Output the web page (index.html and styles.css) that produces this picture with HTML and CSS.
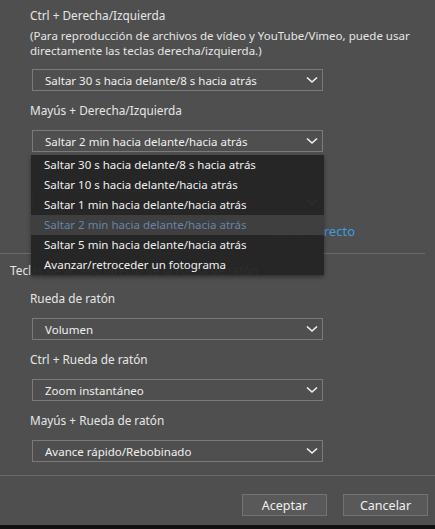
FILE: index.html
```html
<!DOCTYPE html>
<html lang="es">
<head>
<meta charset="utf-8">
<link rel="stylesheet" href="styles.css">
</head>
<body>
<div class="page">
  <div class="group">
    <div class="label">Ctrl + Derecha/Izquierda</div>
    <div class="note">(Para reproducción de archivos de vídeo y YouTube/Vimeo, puede usar<br>directamente las teclas derecha/izquierda.)</div>
    <div class="select"><span>Saltar 30 s hacia delante/8 s hacia atrás</span><svg class="chev" width="12" height="8" viewBox="0 0 12 8"><path d="M1 1.5 L6 6 L11 1.5" fill="none" stroke="#f2f2f2" stroke-width="1.6"/></svg></div>
    <div class="label">Mayús + Derecha/Izquierda</div>
    <div class="select-wrap">
      <div class="select"><span>Saltar 2 min hacia delante/hacia atrás</span><svg class="chev" width="12" height="8" viewBox="0 0 12 8"><path d="M1 1.5 L6 6 L11 1.5" fill="none" stroke="#f2f2f2" stroke-width="1.6"/></svg></div>
      <ul class="menu">
        <li>Saltar 30 s hacia delante/8 s hacia atrás</li>
        <li>Saltar 10 s hacia delante/hacia atrás</li>
        <li>Saltar 1 min hacia delante/hacia atrás</li>
        <li class="sel">Saltar 2 min hacia delante/hacia atrás</li>
        <li>Saltar 5 min hacia delante/hacia atrás</li>
        <li>Avanzar/retroceder un fotograma</li>
      </ul>
    </div>
    <div class="spacer"></div>
    <div class="select hidden-select"><span></span><svg class="chev" width="12" height="8" viewBox="0 0 12 8"><path d="M1 1.5 L6 6 L11 1.5" fill="none" stroke="#f2f2f2" stroke-width="1.6"/></svg></div>
    <div class="link-row"><span class="link">Acceso directo</span></div>
  </div>
  <hr class="sep first">
  <div class="title">Teclas de acceso directo de la rueda de ratón</div>
  <div class="group">
    <div class="label">Rueda de ratón</div>
    <div class="select"><span>Volumen</span><svg class="chev" width="12" height="8" viewBox="0 0 12 8"><path d="M1 1.5 L6 6 L11 1.5" fill="none" stroke="#f2f2f2" stroke-width="1.6"/></svg></div>
    <div class="label">Ctrl + Rueda de ratón</div>
    <div class="select"><span>Zoom instantáneo</span><svg class="chev" width="12" height="8" viewBox="0 0 12 8"><path d="M1 1.5 L6 6 L11 1.5" fill="none" stroke="#f2f2f2" stroke-width="1.6"/></svg></div>
    <div class="label">Mayús + Rueda de ratón</div>
    <div class="select"><span>Avance rápido/Rebobinado</span><svg class="chev" width="12" height="8" viewBox="0 0 12 8"><path d="M1 1.5 L6 6 L11 1.5" fill="none" stroke="#f2f2f2" stroke-width="1.6"/></svg></div>
  </div>
  <hr class="sep last">
  <div class="buttons">
    <button class="btn">Aceptar</button>
    <button class="btn">Cancelar</button>
  </div>
  <div class="bottom"></div>
</div>
</body>
</html>
```
FILE: styles.css
```css
html, body {
  margin: 0;
  padding: 0;
  background: #4f4f4f;
}
body {
  width: 435px;
  height: 529px;
  overflow: hidden;
  font-family: "Noto Sans", "Open Sans", sans-serif;
  font-size: 11.5px;
  color: #e6e6e6;
}
.page {
  display: flex;
  flex-direction: column;
  height: 529px;
  padding-top: 7px;
  box-sizing: border-box;
}
.group {
  display: flex;
  flex-direction: column;
  padding-left: 30px;
}
.label {
  font-size: 11.8px;
  line-height: 16px;
  margin-bottom: 12px;
}
.spacer {
  height: 16px;
  margin-bottom: 12px;
}
.note {
  line-height: 15px;
  margin-top: -7px;
  margin-bottom: 11px;
}
.select {
  width: 291px;
  height: 22px;
  margin-left: 2px;
  box-sizing: border-box;
  border: 1px solid #7a7a7a;
  display: flex;
  align-items: center;
  justify-content: space-between;
  padding: 0 4px 0 12px;
  margin-bottom: 11px;
  color: #f0f0f0;
}
.select-wrap {
  position: relative;
}
.menu {
  position: absolute;
  left: 1px;
  top: 25px;
  width: 293px;
  margin: 0;
  padding: 0;
  list-style: none;
  background: rgba(36, 36, 36, 0.96);
  box-shadow: 0 2px 4px rgba(0,0,0,0.4);
  z-index: 2;
}
.menu li {
  height: 20px;
  line-height: 20px;
  padding-left: 13px;
  color: #f0f0f0;
}
.menu li.sel {
  background: #3f3f3f;
  color: #6585a9;
}
.link-row {
  width: 325px;
  text-align: right;
  line-height: 16px;
  margin-top: -1px;
}
.link {
  color: #3d9be0;
  font-size: 13px;
}
.sep {
  border: none;
  border-top: 1px solid #6a6a6a;
  margin: 13px 0 0 0;
  height: 0;
}
.sep.first {
  margin-right: 10px;
}
.title {
  padding-left: 10px;
  line-height: 16px;
  font-size: 11.8px;
  margin-top: 8px;
  margin-bottom: 12px;
}
.sep.last {
  margin-top: 2px;
}
.buttons {
  display: flex;
  justify-content: flex-end;
  gap: 16px;
  padding-right: 7px;
  margin-top: 18px;
}
.btn {
  width: 85px;
  height: 22px;
  box-sizing: border-box;
  background: #595959;
  border: 1px solid #737373;
  color: #f0f0f0;
  font-family: "Noto Sans", "Open Sans", sans-serif;
  font-size: 12.5px;
  padding: 0;
}
.bottom {
  margin-top: auto;
  height: 4px;
  background: #111;
}
```
